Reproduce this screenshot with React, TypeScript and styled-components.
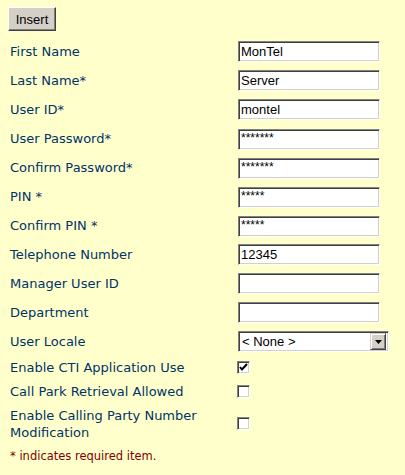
import styled, { createGlobalStyle } from "styled-components";

const GlobalStyle = createGlobalStyle`
  html, body {
    margin: 0;
    padding: 0;
    background: #ffffcc;
  }
  body {
    font-family: "DejaVu Sans", Verdana, sans-serif;
  }
`;

const Page = styled.div`
  padding: 7px 8px 0 8px;
  width: 405px;
  height: 475px;
  box-sizing: border-box;
  background: #ffffcc;
`;

const Button = styled.button`
  display: block;
  width: 48px;
  height: 24px;
  padding: 0;
  margin: 0 0 6px 0;
  background: #d4d0c8;
  font-family: "Liberation Sans", Arial, sans-serif;
  font-size: 13px;
  color: #000;
  border: 1px solid;
  border-color: #ffffff #404040 #404040 #ffffff;
  box-shadow: inset -1px -1px 0 #808080;
`;

const Row = styled.div<{ $h: number }>`
  display: grid;
  grid-template-columns: 230px 1fr;
  align-items: center;
  height: ${(p) => p.$h}px;
`;

const Label = styled.div`
  padding-left: 2px;
  font-size: 13px;
  line-height: 17px;
  color: #003366;
`;

const Field = styled.input<{ $masked?: boolean }>`
  box-sizing: border-box;
  width: 142px;
  height: 21px;
  margin: 0;
  padding: ${(p) => (p.$masked ? "0 2px 4px 2px" : "0 2px")};
  background: #fff;
  font-family: "Liberation Sans", Arial, sans-serif;
  font-size: ${(p) => (p.$masked ? "12px" : "13px")};
  color: #000;
  border: 1px solid;
  border-color: #808080 #ffffff #ffffff #808080;
  box-shadow: inset 1px 1px 0 #404040, inset -1px -1px 0 #d4d0c8;
  outline: none;
`;

const Select = styled.div`
  box-sizing: border-box;
  width: 151px;
  height: 21px;
  display: flex;
  align-items: center;
  background: #fff;
  border: 1px solid;
  border-color: #808080 #ffffff #ffffff #808080;
  box-shadow: inset 1px 1px 0 #404040, inset -1px -1px 0 #d4d0c8;
  padding: 2px 2px 2px 3px;
  font-family: "Liberation Sans", Arial, sans-serif;
  font-size: 13px;
  color: #000;
`;

const SelectText = styled.span`
  flex: 1;
`;

const ArrowBtn = styled.span`
  box-sizing: border-box;
  width: 16px;
  height: 17px;
  display: flex;
  align-items: center;
  justify-content: center;
  background: #d4d0c8;
  border: 1px solid;
  border-color: #d4d0c8 #404040 #404040 #d4d0c8;
  box-shadow: inset 1px 1px 0 #fff, inset -1px -1px 0 #808080;
`;

const Check = styled.span`
  box-sizing: border-box;
  width: 13px;
  height: 13px;
  margin-left: -1px;
  display: flex;
  align-items: center;
  justify-content: center;
  background: #fff;
  border: 1px solid;
  border-color: #808080 #ffffff #ffffff #808080;
  box-shadow: inset 1px 1px 0 #404040, inset -1px -1px 0 #d4d0c8;
`;

const Note = styled.div`
  margin-top: 7px;
  padding-left: 2px;
  font-size: 11.5px;
  color: #800000;
`;

const fields: [string, string, boolean?][] = [
  ["First Name", "MonTel"],
  ["Last Name*", "Server"],
  ["User ID*", "montel"],
  ["User Password*", "*******", true],
  ["Confirm Password*", "*******", true],
  ["PIN *", "*****", true],
  ["Confirm PIN *", "*****", true],
  ["Telephone Number", "12345"],
  ["Manager User ID", ""],
  ["Department", ""],
];

const checks: [string[], boolean, number][] = [
  [["Enable CTI Application Use"], true, 22],
  [["Call Park Retrieval Allowed"], false, 27],
  [["Enable Calling Party Number", "Modification"], false, 37],
];

export default function App() {
  return (
    <Page>
      <GlobalStyle />
      <Button>Insert</Button>
      {fields.map(([label, value, masked]) => (
        <Row key={label} $h={29}>
          <Label>{label}</Label>
          <div>
            <Field defaultValue={value} $masked={masked} />
          </div>
        </Row>
      ))}
      <Row $h={29}>
        <Label>User Locale</Label>
        <Select>
          <SelectText>&lt; None &gt;</SelectText>
          <ArrowBtn>
            <svg width="7" height="4" viewBox="0 0 7 4">
              <path d="M0 0h7L3.5 4z" fill="#000" />
            </svg>
          </ArrowBtn>
        </Select>
      </Row>
      {checks.map(([lines, on, h]) => (
        <Row key={lines[0]} $h={h}>
          <Label>
            {lines.map((l) => (
              <div key={l}>{l}</div>
            ))}
          </Label>
          <Check>
            {on && (
              <svg width="9" height="9" viewBox="0 0 9 9">
                <path d="M1 4l2 2.5L8 1" stroke="#000" strokeWidth="2" fill="none" />
              </svg>
            )}
          </Check>
        </Row>
      ))}
      <Note>* indicates required item.</Note>
    </Page>
  );
}
